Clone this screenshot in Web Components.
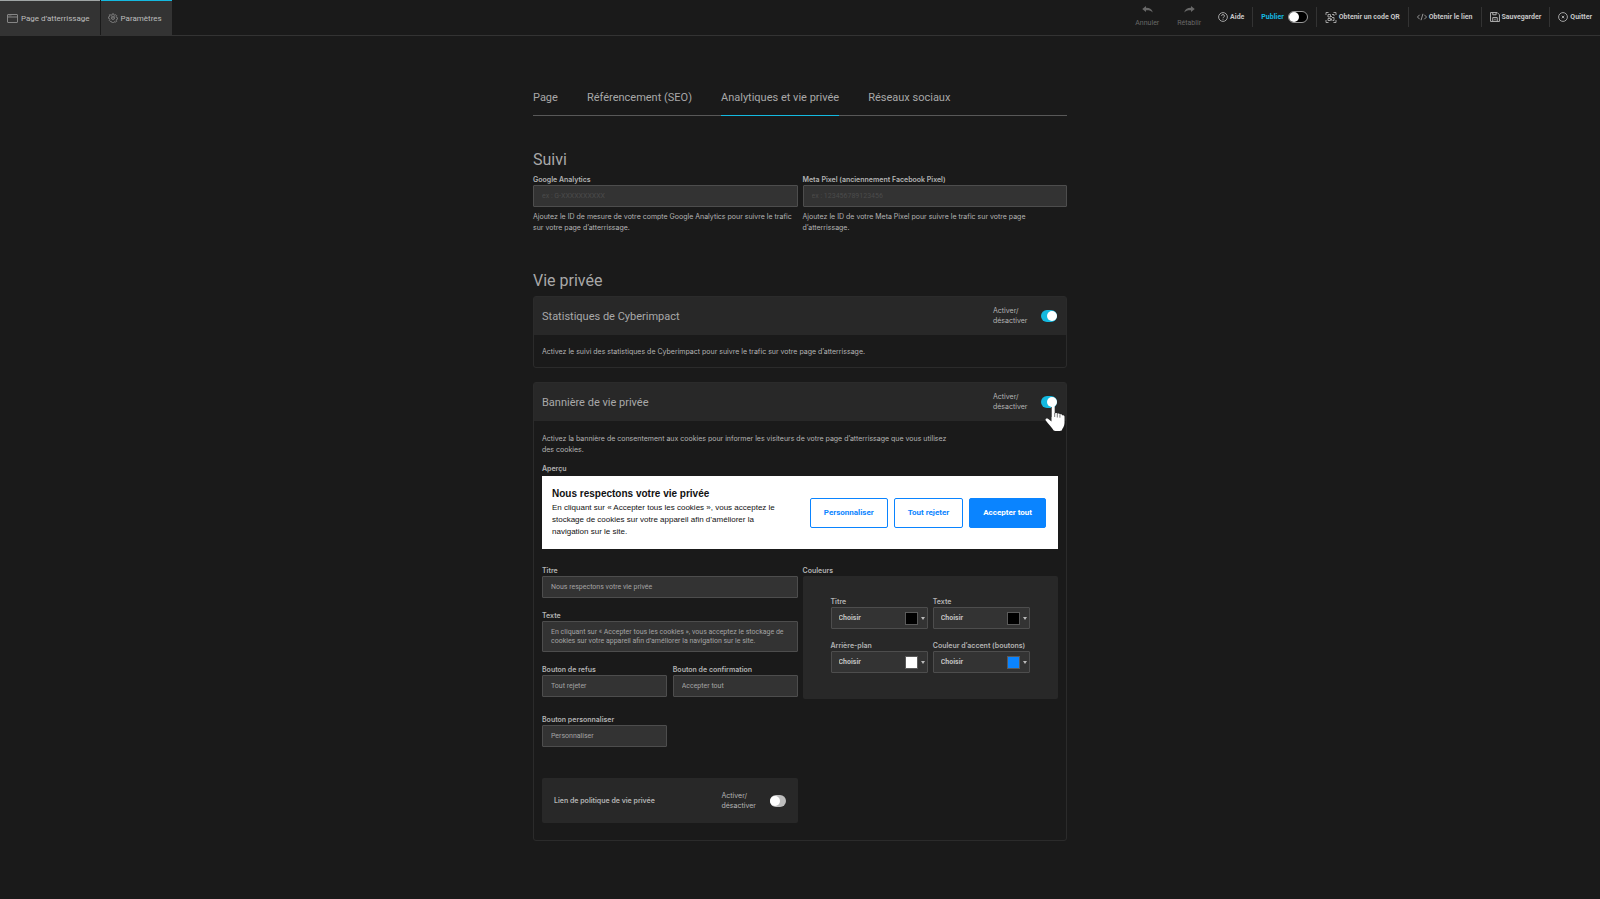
<!DOCTYPE html>
<html lang="fr">
<head>
<meta charset="utf-8">
<title>Paramètres – Page d'atterrissage</title>
<style>
html{background:#1a1a1a}
body{margin:0;font-family:Roboto,"Liberation Sans",sans-serif;color:#b4b4b4;
  --accent:#14b9e0;--panel:#282828;--field:#333;--edge:#4d4d4d;--small:Inter,Roboto,sans-serif}
</style>
</head>
<body>
<settings-app></settings-app>
<script>
const define = (name, html, setup) => {
  const tpl = document.createElement('template');
  tpl.innerHTML = '<style>*{box-sizing:border-box}:host{display:block;box-sizing:border-box}</style>' + html;
  customElements.define(name, class extends HTMLElement {
    constructor() {
      super();
      this.attachShadow({mode: 'open'}).append(tpl.content.cloneNode(true));
    }
    connectedCallback() { if (setup) setup(this, this.shadowRoot); }
  });
};

const ICONS = {
  window: ['0 0 22 18', '<rect x="1" y="1" width="20" height="16" rx="1"/><path d="M1 6h20M3.5 3.6h1.5M7 3.6h1.5"/>'],
  gear: ['0 0 24 24', '<path d="M10.3 2h3.4l.6 2.7 2 .9 2.4-1.5 2.3 2.4-1.4 2.3.9 2.1 2.6.5v3.3l-2.6.6-.9 2 1.4 2.4-2.3 2.3-2.4-1.4-2 .9-.6 2.5h-3.4l-.6-2.5-2-.9L5.3 20 3 17.7l1.4-2.4-.9-2L.9 12.7V9.4l2.6-.5.9-2.1L3 4.5l2.3-.4 2.400 1.500 2-.9z"/><circle cx="12" cy="11.500" r="4"/><circle cx="12" cy="11.500" r="1"/>'],
  undo: ['0 0 22 14', '<path fill="currentColor" stroke="none" d="M8 0v3.500c8 0 12.500 3 13.500 9.500C18.500 9.500 14.500 8.300 8 8.500V12L.5 6z"/>'],
  redo: ['0 0 22 14', '<path fill="currentColor" stroke="none" d="M14 0v3.500C6 3.500 1.500 6.500.5 13 3.500 9.500 7.500 8.300 14 8.500V12l7.500-6z"/>'],
  help: ['0 0 20 20', '<circle cx="10" cy="10" r="8.800"/><path d="M7 7.800c.2-3.800 6-3.600 6 .2 0 2.200-3 2.200-3 4.500M10 14.200v1.500"/>'],
  qr: ['0 0 22 22', '<path d="M1 6V1h5M16 1h5v5M21 16v5h-5M6 21H1v-5M5 5h5v5H5zM13 5h4v3M13 11h4v6h-3M5 13h5v4H5zM12 8v2M12 13v4"/>'],
  code: ['0 0 22 16', '<path d="M6 3L1 8l5 5M16 3l5 5-5 5M13 1L9 15"/>'],
  save: ['0 0 18 18', '<path d="M1 1h12l4 4v12H1zM5 1v4h6V1M5 17v-7h8v7M9 12v3"/>'],
  quit: ['0 0 20 20', '<circle cx="10" cy="10" r="8.800"/><path d="M7.500 7.500l5 5M12.500 7.500l-5 5"/>']
};

define('ui-icon', `<style>
:host{display:inline-flex;flex:none}
:host([name=qr]){--w:12px;--h:11px}
svg{display:block;width:var(--w,10px);height:var(--h,10px);fill:none;stroke:currentColor;stroke-width:1.8;stroke-linejoin:round}
</style><svg aria-hidden="true"></svg>`, (el, root) => {
  const icon = ICONS[el.getAttribute('name')];
  if (!icon) return;
  const svg = root.querySelector('svg');
  svg.setAttribute('viewBox', icon[0]);
  svg.innerHTML = icon[1];
});

const placeIcon = (el, root) => {
  const icon = document.createElement('ui-icon');
  icon.setAttribute('name', el.getAttribute('icon'));
  root.querySelector('a,button').prepend(icon);
};

define('app-tab', `<style>
:host{background:var(--field);border-top:1px solid #a0a5a5}
:host([active]){border-top-color:var(--accent)}
a{display:flex;align-items:center;gap:3px;height:34px;padding:0 10px 0 7px;color:#bdbdbd;text-decoration:none;font-size:8px;white-space:nowrap}
ui-icon{--w:11px;--h:9px;color:#8f8f8f}
:host([active]) ui-icon{--w:10px;--h:10px}
</style><a href="#"><slot></slot></a>`, placeIcon);

define('tool-button', `<style>
button{display:flex;align-items:center;gap:2px;border:0;padding:0;background:none;color:#c6c6c6;font:700 7px/10px Roboto,sans-serif;white-space:nowrap}
ui-icon{color:#b0b0b0}
:host([stacked]) button{flex-direction:column;gap:5px;padding:0 1px;color:#686868;font-weight:400}
:host([stacked]) ui-icon{--w:11px;--h:7px;color:#686868}
</style><button type="button"><slot></slot></button>`, (el, root) => {
  placeIcon(el, root);
  root.querySelector('button').disabled = el.hasAttribute('stacked');
});

define('ui-toggle', `<style>
:host{display:inline-flex}
label{display:flex;align-items:center;gap:var(--gap,14px);font:var(--label-font,400 7px/10px Inter,sans-serif);color:var(--label,inherit)}
span{width:var(--label-width,auto)}
input{appearance:none;margin:0;width:16px;height:12px;border-radius:6px;background:#bdbdbd;display:flex;align-items:center;flex:none}
input::before{content:"";width:10px;height:10px;border-radius:5px;background:#fff}
input:checked{background:var(--accent);justify-content:flex-end}
:host([outlined]) input{width:20px;background:#000;border:1px solid #999}
</style><label><span><slot></slot></span><input type="checkbox" role="switch"></label>`, (el, root) => {
  root.querySelector('input').checked = el.hasAttribute('checked');
});

define('top-bar', `<style>
:host{display:flex;justify-content:space-between;height:36px;border-bottom:1px solid #333}
nav{display:flex;gap:1px}
.tools{display:flex;align-items:center;padding-bottom:1px}
.group{display:flex;align-items:center;height:20px;padding:0 8px}
.group + .group{border-left:1px solid #333}
.history{gap:16px}
ui-toggle{--gap:4px;--label:var(--accent);--label-font:700 7px/10px Roboto,sans-serif}
</style>
<nav><app-tab icon="window">Page d’atterrissage</app-tab><app-tab icon="gear" active>Paramètres</app-tab></nav>
<div class="tools">
<div class="group history"><tool-button icon="undo" stacked>Annuler</tool-button><tool-button icon="redo" stacked>Rétablir</tool-button><tool-button icon="help">Aide</tool-button></div>
<div class="group"><ui-toggle outlined>Publier</ui-toggle></div>
<div class="group"><tool-button icon="qr">Obtenir un code QR</tool-button></div>
<div class="group"><tool-button icon="code">Obtenir le lien</tool-button></div>
<div class="group"><tool-button icon="save">Sauvegarder</tool-button></div>
<div class="group"><tool-button icon="quit">Quitter</tool-button></div>
</div>`);

define('section-nav', `<style>
nav{display:flex;gap:29px;border-bottom:1px solid #585858}
a{font-size:11px;line-height:16px;padding:0 0 9px;margin-bottom:-1px;border-bottom:1px solid transparent;color:#a8a8a8;text-decoration:none;white-space:nowrap}
a[aria-current]{border-color:var(--accent)}
</style><nav><a href="#">Page</a><a href="#">Référencement (SEO)</a><a href="#" aria-current="page">Analytiques et vie privée</a><a href="#">Réseaux sociaux</a></nav>`);

define('text-field', `<style>
label{display:block;font:600 7px/10px var(--small);color:#b4b4b4}
input,textarea{display:block;width:100%;height:22px;padding:0 8px;background:var(--field);border:1px solid var(--edge);border-radius:1px;color:#a3a3a3;font:400 7px/9px Roboto,sans-serif;resize:none;overflow:hidden}
textarea{height:31px;padding:6px 8px}
::placeholder{color:#4b4b4b;opacity:1}
p{margin:4px 0 0;font:400 7px/11px var(--small)}
</style><label for="f"></label>`, (el, root) => {
  const f = document.createElement(el.hasAttribute('multiline') ? 'textarea' : 'input');
  f.id = 'f';
  f.value = el.getAttribute('value') || '';
  f.placeholder = el.getAttribute('placeholder') || '';
  root.querySelector('label').textContent = el.getAttribute('label');
  root.querySelector('label').after(f);
  if (el.hasAttribute('help')) {
    const p = document.createElement('p');
    p.textContent = el.getAttribute('help');
    f.after(p);
  }
});

define('color-select', `<style>
label{display:block;font:600 7px/10px var(--small)}
div{display:flex;align-items:center;height:22px;padding-right:2px;background:var(--field);border:1px solid var(--edge);border-radius:1px}
select{appearance:none;flex:1;min-width:0;height:100%;border:0;padding:0 7px;background:none;color:#c0c0c0;font:700 7px/10px Roboto,sans-serif}
i{width:13px;height:13px;border:1px solid #5a5a5a;background:var(--swatch)}
b{margin-left:3px;border:solid transparent;border-width:3px 2px 0;border-top-color:#bbb}
</style><label for="s"><slot></slot></label><div><select id="s"><option>Choisir</option></select><i></i><b></b></div>`, (el, root) => {
  root.querySelector('i').style.setProperty('--swatch', el.getAttribute('color'));
});

define('option-card', `<style>
:host{border:1px solid #2b2b2b;border-radius:3px}
header{display:flex;align-items:center;justify-content:space-between;height:38px;padding:0 9px 0 8px;background:var(--panel)}
h3{margin:0;font-size:11px;font-weight:400;color:#a8a8a8}
.body{padding:var(--body-pad,11px 8px 10px)}
ui-toggle{--label-width:34px}
</style><header><h3></h3><ui-toggle checked>Activer/ désactiver</ui-toggle></header><div class="body"><slot></slot></div>`, (el, root) => {
  root.querySelector('h3').textContent = el.getAttribute('heading');
});

define('cookie-banner', `<style>
:host{display:flex;align-items:center;justify-content:space-between;height:73px;padding:0 12px 0 10px;background:#fff;color:#111;font-family:"Liberation Sans",Arial,sans-serif}
h4{margin:0 0 2px;font-size:10px;line-height:12px}
p{margin:0;max-width:228px;font-size:8px;line-height:12px}
.actions{display:flex;gap:6px}
button{height:30px;padding:0 13px;border:1px solid #0a84ff;border-radius:2px;background:#fff;color:#0a84ff;font:700 8px/10px Roboto,sans-serif}
button.main{background:#0a84ff;color:#fff}
</style><div><h4>Nous respectons votre vie privée</h4><p>En cliquant sur « Accepter tous les cookies », vous acceptez le stockage de cookies sur votre appareil afin d’améliorer la navigation sur le site.</p></div>
<div class="actions"><button type="button">Personnaliser</button><button type="button">Tout rejeter</button><button type="button" class="main">Accepter tout</button></div>`);

define('hand-cursor', `<style>
:host{position:absolute;right:1px;top:22px;pointer-events:none}
svg{display:block;width:20px;height:26px}
</style><svg viewBox="0 0 20 26" aria-hidden="true"><path fill="#fff" d="M6.500 1.500C6.500 0 9.500 0 9.700 1.500V8.500c.6-.9 2.300-.7 2.600.4.900-.8 2.400-.4 2.600.7.900-.6 2.200-.2 2.400.8 1-.4 2.200.2 2.200 1.300V18c0 3.500-2 5-2.800 7.500-2.500.9-6 .9-8 0C7 22.500 3.500 19.500.8 15.600c-1-1.800 1-2.900 2.500-1.700l3.200 2.500z"/><path fill="none" stroke="#555" stroke-width=".8" d="M6.500 2v10M9.700 8v4M12.300 9v3.500M14.900 9.700v3"/></svg>`);

define('settings-app', `<style>
main{width:min(534px,calc(100% - 32px));margin:0 auto;padding:54px 0 58px}
h2{margin:0;font-size:16px;line-height:20px;font-weight:400;color:#a8a8a8}
.two{display:grid;grid-template-columns:1fr 1fr;gap:5px;align-items:start}
.tracking{margin:5px 0 38px}
section-nav{margin-bottom:34px}
h2 + option-card{margin:5px 0 14px}
.note{margin:0;font:400 7px/11px var(--small)}
.privacy{position:relative;--body-pad:12px 8px 17px}
.intro{max-width:410px}
.caption{margin:9px 0 2px;font:600 7px/10px var(--small)}
cookie-banner{margin-bottom:17px}
.fields{display:grid;gap:13px}
.pair{display:grid;grid-template-columns:1fr 1fr;gap:18px 6px}
.colors{display:grid;grid-template-columns:1fr 1fr;gap:12px 5px;padding:21px 28px 26px;background:var(--panel);border-radius:2px}
.colors-label{margin:0;font:600 7px/10px var(--small)}
.link{display:flex;align-items:center;justify-content:space-between;height:45px;margin-top:18px;padding:0 12px;background:var(--panel);border-radius:2px;font:600 7px/10px var(--small)}
.link ui-toggle{--label-width:34px}
</style>
<top-bar></top-bar>
<main>
<section-nav></section-nav>
<h2>Suivi</h2>
<div class="two tracking">
<text-field label="Google Analytics" placeholder="ex : G-XXXXXXXXXX" help="Ajoutez le ID de mesure de votre compte Google Analytics pour suivre le trafic sur votre page d’atterrissage."></text-field>
<text-field label="Meta Pixel (anciennement Facebook Pixel)" placeholder="ex : 123456789123456" help="Ajoutez le ID de votre Meta Pixel pour suivre le trafic sur votre page d’atterrissage."></text-field>
</div>
<h2>Vie privée</h2>
<option-card heading="Statistiques de Cyberimpact"><p class="note">Activez le suivi des statistiques de Cyberimpact pour suivre le trafic sur votre page d’atterrissage.</p></option-card>
<option-card class="privacy" heading="Bannière de vie privée">
<p class="note intro">Activez la bannière de consentement aux cookies pour informer les visiteurs de votre page d’atterrissage que vous utilisez des cookies.</p>
<p class="caption">Aperçu</p>
<cookie-banner></cookie-banner>
<div class="two">
<div class="fields">
<text-field label="Titre" value="Nous respectons votre vie privée"></text-field>
<text-field label="Texte" multiline value="En cliquant sur « Accepter tous les cookies », vous acceptez le stockage de cookies sur votre appareil afin d’améliorer la navigation sur le site."></text-field>
<div class="pair">
<text-field label="Bouton de refus" value="Tout rejeter"></text-field>
<text-field label="Bouton de confirmation" value="Accepter tout"></text-field>
<text-field label="Bouton personnaliser" value="Personnaliser"></text-field>
</div>
<div class="link"><span>Lien de politique de vie privée</span><ui-toggle>Activer/ désactiver</ui-toggle></div>
</div>
<div>
<p class="colors-label">Couleurs</p>
<div class="colors">
<color-select color="#000">Titre</color-select>
<color-select color="#000">Texte</color-select>
<color-select color="#fff">Arrière-plan</color-select>
<color-select color="#0a84ff">Couleur d’accent (boutons)</color-select>
</div>
</div>
</div>
<hand-cursor></hand-cursor>
</option-card>
</main>`);
</script>
</body>
</html>
